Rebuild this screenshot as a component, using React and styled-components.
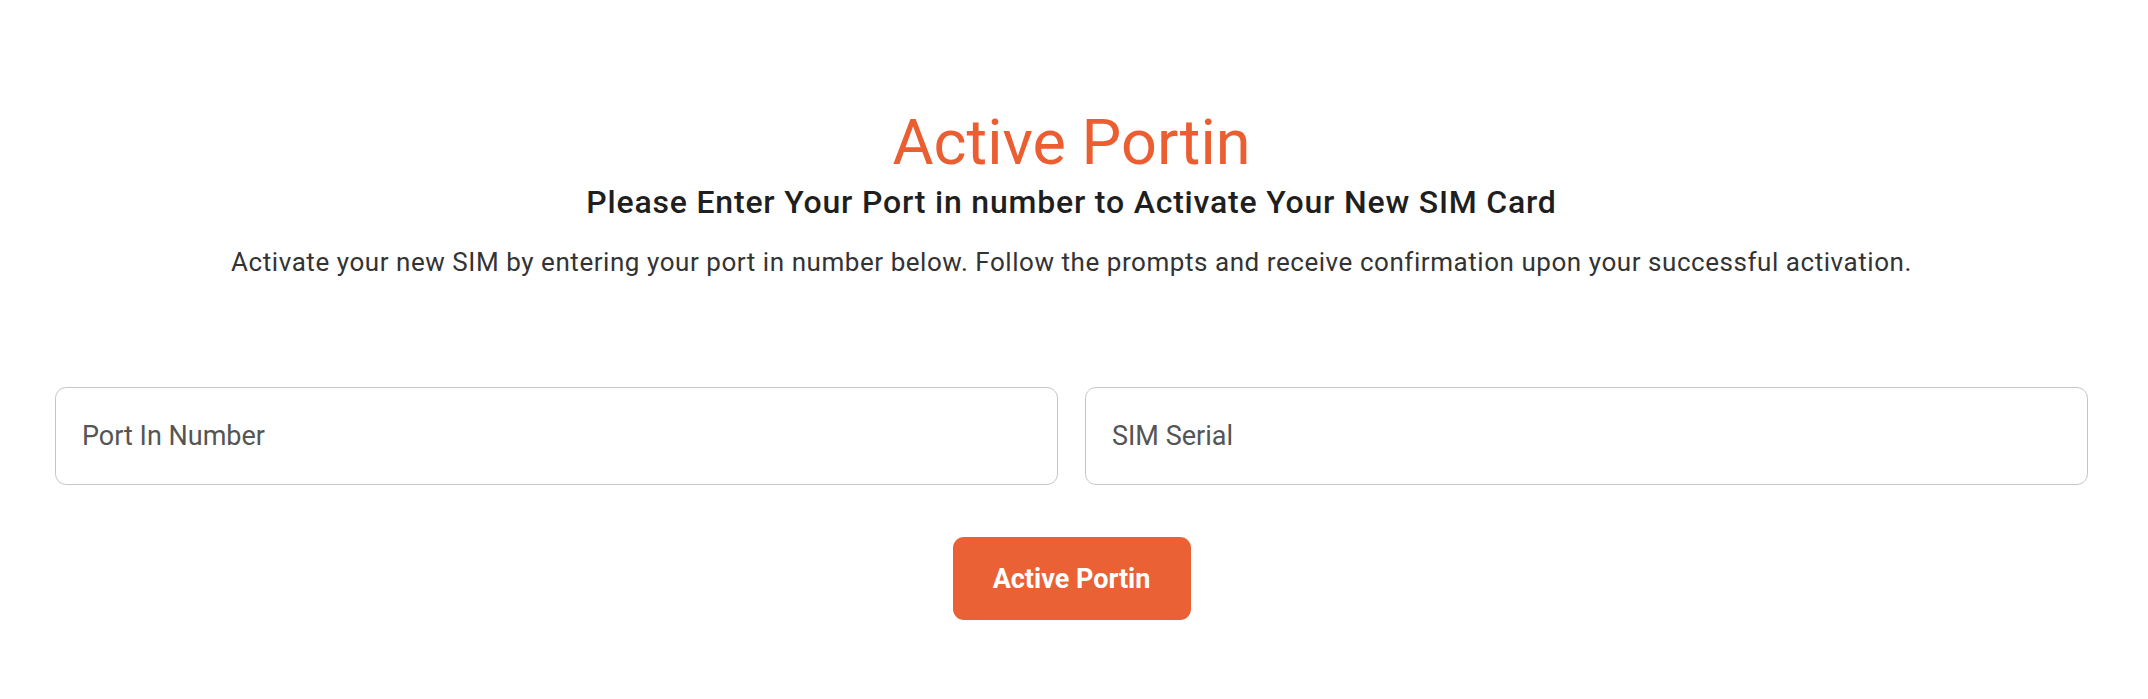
import React from 'react'
import styled, { createGlobalStyle } from 'styled-components'

const GlobalStyle = createGlobalStyle`
  * {
    box-sizing: border-box;
  }
  body {
    margin: 0;
    background: #ffffff;
    font-family: Roboto, "Liberation Sans", sans-serif;
  }
`

const Page = styled.div`
  display: flex;
  flex-direction: column;
  align-items: center;
  padding: 111px 60px 0 55px;
  min-height: 699px;
`

const Title = styled.h1`
  margin: 0;
  font-size: 63px;
  line-height: 1;
  font-weight: 400;
  color: #eb5e32;
`

const Subtitle = styled.h2`
  margin: 12px 0 0;
  font-size: 32px;
  line-height: 1;
  font-weight: 500;
  letter-spacing: 0.8px;
  color: #1f1f1f;
`

const Desc = styled.p`
  margin: 31px 0 0;
  font-size: 26px;
  line-height: 1;
  letter-spacing: 0.55px;
  color: #333;
  text-align: center;
`

const Row = styled.div`
  display: grid;
  grid-template-columns: 1fr 1fr;
  gap: 27px;
  width: 100%;
  margin-top: 112px;
`

const Input = styled.input`
  height: 98px;
  border: 1.5px solid #c6c6c6;
  border-radius: 11px;
  padding: 0 26px;
  font-family: inherit;
  font-size: 27px;
  color: #333;
  outline: none;
  &::placeholder {
    color: #555;
  }
`

const Button = styled.button`
  margin-top: 52px;
  width: 238px;
  height: 83px;
  border: none;
  border-radius: 11px;
  background: #ea6136;
  color: #fff;
  font-family: inherit;
  font-size: 27px;
  font-weight: 700;
  cursor: pointer;
`

const App = () => {
  return (
    <Page>
      <GlobalStyle />
      <Title>Active Portin</Title>
      <Subtitle>Please Enter Your Port in number to Activate Your New SIM Card</Subtitle>
      <Desc>
        Activate your new SIM by entering your port in number below. Follow the prompts and receive confirmation upon your successful activation.
      </Desc>
      <Row>
        <Input placeholder="Port In Number" />
        <Input placeholder="SIM Serial" />
      </Row>
      <Button>Active Portin</Button>
    </Page>
  )
}

export default App
